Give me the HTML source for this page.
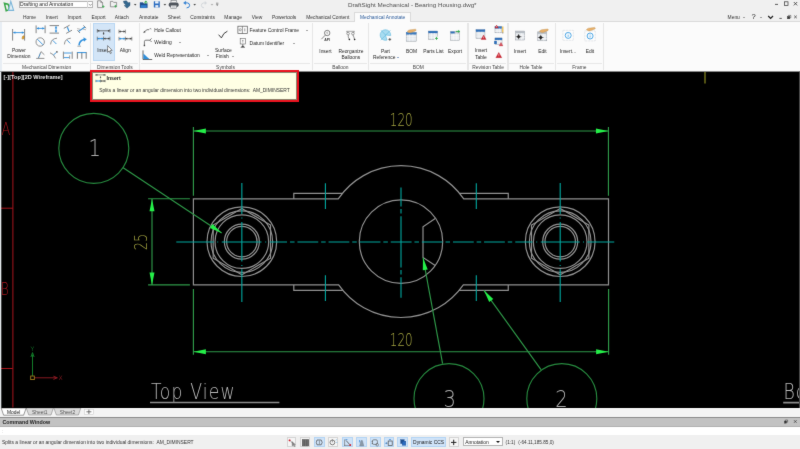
<!DOCTYPE html>
<html lang="en"><head><meta charset="utf-8"><title>DraftSight Mechanical - Bearing Housing.dwg*</title>
<style>
html,body{margin:0;padding:0;background:#f0f0f0;}
body{width:800px;height:449px;overflow:hidden;font-family:"Liberation Sans",sans-serif;color:#333;}
#app{will-change:transform;filter:url(#soft);position:relative;width:800px;height:449px;overflow:hidden;background:#f0f0f0;}
.a{position:absolute;white-space:nowrap;}
.t{position:absolute;white-space:nowrap;font-size:4.9px;line-height:7px;color:#262626;transform:translateX(-50%);text-align:center;}
.tl{position:absolute;white-space:nowrap;font-size:4.9px;line-height:7px;color:#262626;}
.gl{position:absolute;white-space:nowrap;font-size:4.9px;line-height:7px;color:#444;transform:translateX(-50%);top:64.1px;}
.vs{position:absolute;top:23.4px;width:1.2px;height:46.4px;background:#e6e6e6;}
.hs{position:absolute;top:63.1px;height:1px;background:#e8e8e8;}
.dd{position:absolute;width:0;height:0;border-left:1.4px solid transparent;border-right:1.4px solid transparent;border-top:1.8px solid #444;}
#ribbon{position:absolute;left:0;top:21.2px;width:800px;height:50.6px;background:#fbfbfb;border-top:1px solid #dadada;border-bottom:1px solid #e0e0e0;box-sizing:border-box;}
#draw{position:absolute;left:0;top:0;width:800px;height:449px;}
#cad{position:absolute;left:0;top:0;display:block;}
#cad .geo *{fill:none;stroke:#909090;stroke-width:1.2;}
#cad .cl *{fill:none;stroke:#00a8a0;stroke-width:1.1;}
#cad .cl .dd{stroke-dasharray:4.5 2.9 20.8 2.9;}
#cad .cl .dd2{stroke-dasharray:14 2.4 2.4 2.4;}
#cad .dim *{fill:none;stroke:#2e9848;stroke-width:1.15;}
#cad .dim .bl{stroke:#26883e;}
#cad .ah{fill:#24ee48;stroke:none;}
#cad text{font-family:"DejaVu Sans Light","DejaVu Sans","Liberation Sans",sans-serif;font-weight:200;}
#cad .dt text{fill:#a4a440;font-size:16.8px;}
#cad .bt text{fill:#acacac;font-size:23px;}
#cad .tv text{fill:#b8b8b8;font-size:21.6px;}
#cad .tv path{stroke:#8c8c8c;stroke-width:1.6;fill:none;}
#cad .rd path{stroke:#a8141c;stroke-width:1;fill:none;}
#cad .rd text{fill:#b0161e;font-size:18.2px;}
#cad .ucs *{fill:none;stroke-width:.8;}
#cad .ucs text{font-size:6.2px;stroke:none;font-weight:200;}
#cad .vp{font-family:"Liberation Sans",sans-serif;font-weight:700;font-size:6px;fill:#e6e6e6;}
#tip{z-index:5;position:absolute;left:89.9px;top:70.1px;width:209.6px;height:32.3px;box-sizing:border-box;border:2.4px solid #ea121e;background:#ffffe4;}
#tipin{position:absolute;left:0;top:0;right:0;bottom:0;border:.5px solid #8a8a70;box-sizing:border-box;}

</style></head>
<body>
<svg width="0" height="0" style="position:absolute"><filter id="soft" x="0" y="0" width="100%" height="100%" color-interpolation-filters="sRGB"><feConvolveMatrix order="3" kernelMatrix="1 5 1 5 60 5 1 5 1" divisor="84" edgeMode="duplicate" preserveAlpha="true"/></filter></svg>
<div id="app">
<div id="titlebar" class="a" style="left:0;top:0;width:800px;height:12.4px;background:#f0f0f0"></div>
<div class="a" style="left:18.5px;top:.6px;width:74.6px;height:7.9px;box-sizing:border-box;border:.7px solid #b4b4b4;background:#fff"></div>
<div class="a" style="left:87.3px;top:1.2px;width:.5px;height:6.7px;background:#d0d0d0"></div>
<div class="tl" style="left:20px;top:1.3px;font-size:5.1px;color:#222">Drafting and Annotation</div>
<div class="a" style="left:342.3px;top:1.3px;width:140px;text-align:center;font-size:6.25px;line-height:8px;color:#505050">DraftSight Mechanical - Bearing Housing.dwg*</div>
<div id="tabrow" class="a" style="left:0;top:12.4px;width:800px;height:10px;background:#f0f0f0"></div>
<div id="ribbon"></div>
<div class="a" style="left:354.2px;top:11.8px;width:56.8px;height:10.4px;box-sizing:border-box;border:1px solid #dadada;border-bottom:none;background:#fbfbfb"></div>
<div class="t" style="left:29.5px;top:13.7px;color:#333">Home</div>
<div class="t" style="left:51.8px;top:13.7px;color:#333">Insert</div>
<div class="t" style="left:74.5px;top:13.7px;color:#333">Import</div>
<div class="t" style="left:98.6px;top:13.7px;color:#333">Export</div>
<div class="t" style="left:121.8px;top:13.7px;color:#333">Attach</div>
<div class="t" style="left:148.7px;top:13.7px;color:#333">Annotate</div>
<div class="t" style="left:174.2px;top:13.7px;color:#333">Sheet</div>
<div class="t" style="left:202.5px;top:13.7px;color:#333">Constraints</div>
<div class="t" style="left:233.2px;top:13.7px;color:#333">Manage</div>
<div class="t" style="left:257px;top:13.7px;color:#333">View</div>
<div class="t" style="left:284.2px;top:13.7px;color:#333">Powertools</div>
<div class="t" style="left:327.8px;top:13.7px;color:#333">Mechanical Content</div>
<div class="t" style="left:382.6px;top:13.7px;color:#2a5a9a">Mechanical Annotate</div>
<div class="tl" style="left:727.6px;top:13.7px;color:#333">Menu</div>
<div class="dd" style="left:743.3px;top:16.6px;border-top-color:#555"></div>
<div class="dd" style="left:760.3px;top:16.6px;border-top-color:#555"></div>
<div class="t" style="left:753.6px;top:13.4px;font-size:7.6px;color:#222">?</div>
<div class="a" style="left:0;top:22.2px;width:1.6px;height:49.6px;background:#e8eef4"></div>
<div class="vs" style="left:89.8px"></div>
<div class="vs" style="left:139px"></div>
<div class="vs" style="left:311.8px"></div>
<div class="vs" style="left:368.2px"></div>
<div class="vs" style="left:467.4px"></div>
<div class="vs" style="left:507.4px"></div>
<div class="vs" style="left:555px"></div>
<div class="vs" style="left:603px"></div>
<div class="hs" style="left:3px;width:85.5px"></div>
<div class="hs" style="left:91px;width:46.5px"></div>
<div class="hs" style="left:140.5px;width:169.5px"></div>
<div class="hs" style="left:313.5px;width:53px"></div>
<div class="hs" style="left:370px;width:96px"></div>
<div class="hs" style="left:469px;width:37px"></div>
<div class="hs" style="left:509px;width:44.5px"></div>
<div class="hs" style="left:556.5px;width:45px"></div>
<div class="gl" style="left:46.7px">Mechanical Dimension</div>
<div class="gl" style="left:114.9px">Dimension Tools</div>
<div class="gl" style="left:225.5px">Symbols</div>
<div class="gl" style="left:340.3px">Balloon</div>
<div class="gl" style="left:418.3px">BOM</div>
<div class="gl" style="left:488px">Revision Table</div>
<div class="gl" style="left:531px">Hole Table</div>
<div class="gl" style="left:579.4px">Frame</div>
<div class="a" style="left:93.1px;top:23.2px;width:21.6px;height:38.2px;box-sizing:border-box;border:.7px solid #b9d7f3;background:#d3e5f7"></div>
<div class="t" style="left:18.9px;top:46.5px;">Power</div>
<div class="t" style="left:18.9px;top:53px;">Dimension</div>
<div class="t" style="left:103.3px;top:47.1px;">Insert</div>
<div class="t" style="left:125.3px;top:47.1px;">Align</div>
<div class="tl" style="left:154.2px;top:26.8px;">Hole Callout</div>
<div class="tl" style="left:154.2px;top:39.2px;">Welding</div>
<div class="tl" style="left:154.2px;top:51.9px;">Weld Representation</div>
<div class="dd" style="left:179.3px;top:42px;border-top-color:#555"></div>
<div class="dd" style="left:206.7px;top:55px;border-top-color:#555"></div>
<div class="t" style="left:223.4px;top:46.7px;">Surface</div>
<div class="t" style="left:222.3px;top:53.2px;">Finish</div>
<div class="dd" style="left:231.9px;top:56.1px;border-top-color:#555"></div>
<div class="tl" style="left:249.6px;top:26.7px;">Feature Control Frame</div>
<div class="dd" style="left:305.9px;top:29.6px;border-top-color:#555"></div>
<div class="tl" style="left:249.6px;top:39.6px;">Datum Identifier</div>
<div class="dd" style="left:292.5px;top:42.6px;border-top-color:#555"></div>
<div class="t" style="left:325.4px;top:47.5px;">Insert</div>
<div class="t" style="left:350.9px;top:47.5px;">Reorganize</div>
<div class="t" style="left:350.8px;top:53.9px;">Balloons</div>
<div class="t" style="left:385.4px;top:47.5px;">Part</div>
<div class="t" style="left:384.2px;top:53.9px;">Reference</div>
<div class="dd" style="left:396.7px;top:57px;border-top-color:#2a5a9a"></div>
<div class="t" style="left:411.6px;top:47.5px;">BOM</div>
<div class="t" style="left:433.4px;top:47.5px;">Parts List</div>
<div class="t" style="left:455px;top:47.5px;">Export</div>
<div class="t" style="left:481px;top:47.3px;">Insert</div>
<div class="t" style="left:481px;top:53.5px;">Table</div>
<div class="t" style="left:520px;top:47.5px;">Insert</div>
<div class="t" style="left:542.4px;top:47.5px;">Edit</div>
<div class="t" style="left:568px;top:47.5px;">Insert...</div>
<div class="t" style="left:590px;top:47.5px;">Edit</div>
<svg id="ico" class="a" style="left:0;top:0" width="800" height="72" viewBox="0 0 800 72">
<path d="M4.4 3.2 L6.2 10.8 L8.6 10 Q10.2 7 8 4.2 Z" fill="none" stroke="#3aa648" stroke-width="1.5" /><path d="M10.8 1.4 L8.6 10.4 H13.6 Z" fill="#e4f0f6" stroke="#7ab4d8" stroke-width="1.1" />
<path d="M97.6 .8 H100.8 L102.6 2.6 V7.6 H97.6 Z M100.8 .8 V2.6 H102.6" fill="none" stroke="#757575" stroke-width="0.7" /><path d="M102 6.6 H104.6 M103.3 5.3 V7.9" fill="none" stroke="#2aa844" stroke-width="0.7" /><path d="M110.4 6.8 V1.4 H112.8 L113.6 2.4 H116.6 V6.8 Z" fill="none" stroke="#757575" stroke-width="0.7" /><path d="M114.2 6.2 H116.8 M115.5 4.9 V7.5" fill="none" stroke="#2aa844" stroke-width="0.7" /><path d="M123.4 1.2 L126.4 .8 L128.2 2.8 L130 2.4 L130 5.4 L127 8.2 L124.2 5.6 L126 5.2 L124 3.2 Z" fill="#34688e" stroke="#254a6c" stroke-width="0.4" /><path d="M140 2.6 H143 L143.8 3.6 H147.4 V7.8 H140 Z" fill="#1f4e8e" stroke="#1f4e8e" stroke-width="0.3" /><rect x="140.8" y="5.2" width="5.8" height="2.6" fill="#2f7fd0" stroke="none" stroke-width="0.6" rx="0"/><path d="M145.8 4 V1.6 M144.5 2.6 L145.8 .9 L147.1 2.6" fill="none" stroke="#2aa844" stroke-width="0.9" /><rect x="153.8" y="1.2" width="6" height="6.4" fill="#2b6cc0" stroke="none" stroke-width="0" rx="0.5"/><rect x="155.1" y="1.2" width="3.4" height="2.3" fill="#f0f5fb" stroke="none" stroke-width="0.6" rx="0"/><rect x="155.3" y="5.1" width="3" height="2.5" fill="#e4ecf6" stroke="none" stroke-width="0.6" rx="0"/><rect x="168.8" y="2.4" width="9.8" height="4.6" fill="#4e545c" stroke="none" stroke-width="0" rx="1.8"/><rect x="171" y="0.7" width="5.4" height="2" fill="#f4f4f4" stroke="#5c6268" stroke-width="0.5" rx="0"/><rect x="170.8" y="5.2" width="5.8" height="3" fill="#f6f6f6" stroke="#5c6268" stroke-width="0.5" rx="0"/><path d="M171.8 6.4 H175.6 M171.8 7.3 H175.6" fill="none" stroke="#9aa0a6" stroke-width="0.4" /><path d="M184.8 2.9 H187.4 Q189.6 3.1 189.6 5.4 Q189.6 7.8 186.6 7.9" fill="none" stroke="#2f7fd2" stroke-width="1" /><path d="M185.8 1 L183.4 2.9 L185.8 4.8 Z" fill="#2f7fd2" stroke="#2f7fd2" stroke-width="0.2" /><path d="M205.6 3 H203.4 Q201.4 3.2 201.4 5.4 Q201.4 7.8 204 7.8" fill="none" stroke="#d4d8dc" stroke-width="1" /><path d="M204.8 1.2 L207 3 L204.8 4.8 Z" fill="#d4d8dc" stroke="#d4d8dc" stroke-width="0.2" /><path d="M134 4 L135.2 5.6 L136.4 4 Z" fill="#444" stroke="#444" stroke-width="0.1" /><path d="M163.7 4 L164.9 5.6 L166.1 4 Z" fill="#444" stroke="#444" stroke-width="0.1" /><path d="M193.5 4 L194.7 5.6 L195.9 4 Z" fill="#444" stroke="#444" stroke-width="0.1" /><path d="M210.8 4 L212 5.6 L213.2 4 Z" fill="#aaa" stroke="#aaa" stroke-width="0.1" /><path d="M216 3.2 H218.4" fill="none" stroke="#555" stroke-width="0.6" /><path d="M216 4.4 L217.2 5.8 L218.4 4.4 Z" fill="#555" stroke="#555" stroke-width="0.1" /><path d="M88.8 3.9 L90.3 5.5 L91.8 3.9" fill="none" stroke="#555" stroke-width="0.6" />
<path d="M775 4.4 H778" fill="none" stroke="#333" stroke-width="0.8" /><rect x="784.4" y="1.8" width="3.6" height="3.6" fill="none" stroke="#333" stroke-width="0.7" rx="0"/><path d="M793.8 2 L797.2 5.4 M797.2 2 L793.8 5.4" fill="none" stroke="#333" stroke-width="0.8" /><path d="M768.2 16 L770.6 18.4 L773 16" fill="none" stroke="#222" stroke-width="1.3" /><path d="M779.4 18.4 H781.8" fill="none" stroke="#333" stroke-width="0.8" /><rect x="787.4" y="16.4" width="2.4" height="2.4" fill="#333" stroke="#333" stroke-width="0.4" rx="0"/><path d="M788.4 16.2 V15.4 H790.8 V17.8 H790" fill="none" stroke="#333" stroke-width="0.5" /><path d="M794.2 15.6 L796.8 18.2 M796.8 15.6 L794.2 18.2" fill="none" stroke="#333" stroke-width="0.7" />
<path d="M12.6 29 V40.6 M24.6 29 V40.6" fill="none" stroke="#858585" stroke-width="1" /><path d="M13.4 32.6 H23.8" fill="none" stroke="#2f8fdc" stroke-width="0.9" /><path d="M13.2 32.6 L15.3 31.55 L15.3 33.65 Z" fill="#2f8fdc" stroke="#2f8fdc" stroke-width="0.1" /><path d="M24 32.6 L21.9 31.55 L21.9 33.65 Z" fill="#2f8fdc" stroke="#2f8fdc" stroke-width="0.1" /><ellipse cx="23.2" cy="37.5" rx="1" ry="1.8" fill="#eaa428" stroke="#8a6420" stroke-width=".35" transform="rotate(18 23.2 37.5)"/><path d="M36.1 25.4 V33.2 M45.1 25.4 V33.2" fill="none" stroke="#858585" stroke-width="1" /><path d="M36.8 28.4 H44.4" fill="none" stroke="#2f8fdc" stroke-width="0.9" /><path d="M36.7 28.4 L38.8 27.35 L38.8 29.45 Z" fill="#2f8fdc" stroke="#2f8fdc" stroke-width="0.1" /><path d="M44.5 28.4 L42.4 27.35 L42.4 29.45 Z" fill="#2f8fdc" stroke="#2f8fdc" stroke-width="0.1" /><path d="M49.6 25.6 H59 M49.6 33.1 H59" fill="none" stroke="#858585" stroke-width="1" /><path d="M56 26.4 V32.4" fill="none" stroke="#2f8fdc" stroke-width="0.9" /><path d="M56 26.2 L54.95 28.3 L57.05 28.3 Z" fill="#2f8fdc" stroke="#2f8fdc" stroke-width="0.1" /><path d="M56 32.6 L54.95 30.5 L57.05 30.5 Z" fill="#2f8fdc" stroke="#2f8fdc" stroke-width="0.1" /><path d="M63.8 28.4 L69.6 25.2 M66.2 33.4 L72 30.2" fill="none" stroke="#858585" stroke-width="1" /><path d="M67.4 27.2 L69 31.4" fill="none" stroke="#2f8fdc" stroke-width="1.1" /><path d="M77.4 30.2 L80 33 M83.4 25.4 L86 28.2" fill="none" stroke="#858585" stroke-width="1" /><path d="M78.6 31.4 L84.8 27" fill="none" stroke="#2f8fdc" stroke-width="1.1" /><path d="M77.2 28.6 L80.6 29.4 M82.6 29 L86 29.8" fill="none" stroke="#858585" stroke-width="0.6" /><circle cx="40.2" cy="42" r="4.2" fill="none" stroke="#858585" stroke-width="0.9"/><path d="M37.4 39.2 L43 44.8" fill="none" stroke="#2f8fdc" stroke-width="0.9" /><path d="M50.6 44.4 Q51 38.6 57 38.2" fill="none" stroke="#858585" stroke-width="0.9" /><path d="M56.4 44 L52.8 40.4" fill="none" stroke="#2f8fdc" stroke-width="0.9" /><path d="M64.4 44.4 Q64.8 38.6 70.8 38.2" fill="none" stroke="#858585" stroke-width="0.9" /><path d="M70.2 43.4 L67.2 40.2" fill="none" stroke="#2f8fdc" stroke-width="0.9" /><path d="M79 45.4 Q79.4 40.4 84.4 39.6" fill="none" stroke="#2f8fdc" stroke-width="1.5" /><path d="M83.6 37.6 L86.6 39.2 L84 41.4 Z" fill="#2f8fdc" stroke="#2f8fdc" stroke-width="0.2" /><path d="M77.4 46.2 H81" fill="none" stroke="#858585" stroke-width="0.7" /><path d="M36.2 58.4 H44.4 M38.4 58.2 L41 51.6 L44.4 54.8" fill="none" stroke="#858585" stroke-width="0.9" /><path d="M38.6 57.6 L40.4 53" fill="none" stroke="#2f8fdc" stroke-width="0.9" stroke-dasharray="1 .6"/><path d="M50 52.8 Q54 54 55.6 58.4" fill="none" stroke="#858585" stroke-width="0.9" /><path d="M53.4 55 L56.4 52.4" fill="none" stroke="#2f8fdc" stroke-width="0.9" /><rect x="56.2" y="51.2" width="1.4" height="1.4" fill="#444" stroke="none" stroke-width="0.6" rx="0"/><path d="M63.4 51.6 V58.8 M72.2 51.6 V58.8" fill="none" stroke="#858585" stroke-width="1" /><path d="M64 53 H71.6 M64 57.6 H69.4" fill="none" stroke="#2f8fdc" stroke-width="0.9" /><path d="M69.6 55.4 V58.8" fill="none" stroke="#858585" stroke-width="0.8" /><path d="M77.4 52 V58.8 M81.8 52 V58.8 M86.2 52 V58.8" fill="none" stroke="#858585" stroke-width="1.1" /><path d="M77.4 52.6 H86.2" fill="none" stroke="#2f8fdc" stroke-width="1" />
<path d="M97.4 30.8 H109.8" fill="none" stroke="#444" stroke-width="0.7" /><path d="M97.3 29 V32.6 M109.9 29 V32.6" fill="none" stroke="#444" stroke-width="0.6" /><path d="M97.4 30.8 L99.2 29.9 L99.2 31.7 Z" fill="#444" stroke="#444" stroke-width="0.1" /><path d="M109.8 30.8 L108 29.9 L108 31.7 Z" fill="#444" stroke="#444" stroke-width="0.1" /><path d="M103.6 32 V35" fill="none" stroke="#444" stroke-width="0.6" /><path d="M103.6 32.6 L102.8 34 L104.4 34 Z" fill="#444" stroke="#444" stroke-width="0.1" /><path d="M97.4 38.6 H103.6" fill="none" stroke="#2f8fdc" stroke-width="0.9" /><path d="M103.6 38.6 H109.8" fill="none" stroke="#444" stroke-width="0.7" /><path d="M97.3 36.7 V40.5 M109.9 36.7 V40.5 M103.6 36.6 V40.6" fill="none" stroke="#444" stroke-width="0.6" /><path d="M97.4 38.6 L99.2 37.7 L99.2 39.5 Z" fill="#2f8fdc" stroke="#2f8fdc" stroke-width="0.1" /><path d="M103.5 38.6 L101.7 37.7 L101.7 39.5 Z" fill="#2f8fdc" stroke="#2f8fdc" stroke-width="0.1" /><path d="M103.7 38.6 L105.5 37.7 L105.5 39.5 Z" fill="#444" stroke="#444" stroke-width="0.1" /><path d="M109.8 38.6 L108 37.7 L108 39.5 Z" fill="#444" stroke="#444" stroke-width="0.1" /><path d="M107.6 45.6 V52.4 L109.2 51 L110.4 53.6 L111.4 53.1 L110.2 50.6 L112.2 50.4 Z" fill="#fff" stroke="#222" stroke-width="0.5" /><path d="M119.1 31.5 H125.2" fill="none" stroke="#444" stroke-width="0.7" /><path d="M119 29.6 V33.4 M125.3 29.6 V33.4" fill="none" stroke="#444" stroke-width="0.6" /><path d="M119.1 31.5 L120.8 30.6 L120.8 32.4 Z" fill="#444" stroke="#444" stroke-width="0.1" /><path d="M125.2 31.5 L123.5 30.6 L123.5 32.4 Z" fill="#444" stroke="#444" stroke-width="0.1" /><path d="M119.1 38.7 H125.3" fill="none" stroke="#2f8fdc" stroke-width="0.9" /><path d="M125.3 38.7 H131.7" fill="none" stroke="#444" stroke-width="0.7" /><path d="M119 36.8 V40.6 M125.3 36.7 V40.7 M131.8 36.8 V40.6" fill="none" stroke="#444" stroke-width="0.6" /><path d="M119.1 38.7 L120.9 37.8 L120.9 39.6 Z" fill="#2f8fdc" stroke="#2f8fdc" stroke-width="0.1" /><path d="M125.2 38.7 L123.4 37.8 L123.4 39.6 Z" fill="#2f8fdc" stroke="#2f8fdc" stroke-width="0.1" /><path d="M125.4 38.7 L127.2 37.8 L127.2 39.6 Z" fill="#444" stroke="#444" stroke-width="0.1" /><path d="M131.7 38.7 L129.9 37.8 L129.9 39.6 Z" fill="#444" stroke="#444" stroke-width="0.1" />
<path d="M144.2 32 L147 29.7 H149" fill="none" stroke="#444" stroke-width="0.7" /><path d="M143.4 32.7 L145.4 32.2 L144.4 30.9 Z" fill="#444" stroke="#444" stroke-width="0.2" /><path d="M149.8 28.2 L151 29.4 M151 28.2 L149.8 29.4" fill="none" stroke="#444" stroke-width="0.5" /><path d="M144.4 45.2 V41.6 Q144.4 40.2 145.8 40.2 H149.8 M149.8 40.2 L151.6 38.4 M149.8 40.2 L151.6 42" fill="none" stroke="#444" stroke-width="0.7" /><rect x="143.7" y="44.8" width="1.4" height="1.4" fill="#444" stroke="none" stroke-width="0.6" rx="0"/><path d="M143 50.4 V59.5 H152.2" fill="none" stroke="#444" stroke-width="0.8" /><path d="M143.5 53.8 V59 H149.2 Z" fill="#2f8fdc" stroke="#2f8fdc" stroke-width="0.2" /><path d="M218.6 34.7 L221.4 37.9 Q223.4 32.6 227.4 31.2" fill="none" stroke="#333" stroke-width="0.95" /><rect x="237.9" y="26.2" width="9.4" height="7.4" fill="#fdfdfd" stroke="#555" stroke-width="0.7" rx="0"/><path d="M242.4 26.2 V33.6" fill="none" stroke="#555" stroke-width="0.6" /><circle cx="240.2" cy="29.8" r="1.1" fill="none" stroke="#555" stroke-width="0.5"/><path d="M244.8 28.4 V31.4" fill="none" stroke="#555" stroke-width="0.6" /><rect x="240.2" y="38.6" width="5.2" height="5.4" fill="#fdfdfd" stroke="#666" stroke-width="0.6" rx="0"/><path d="M242.8 40 V42.6 M242.2 40.4 H243.4" fill="none" stroke="#666" stroke-width="0.5" /><path d="M242.8 44 V46" fill="none" stroke="#444" stroke-width="0.6" /><path d="M240.6 47.4 L242.8 45.6 L245 47.4 Z" fill="#444" stroke="#444" stroke-width="0.2" />
<circle cx="327.2" cy="33" r="2.7" fill="none" stroke="#555" stroke-width="0.7"/><path d="M325.3 35.1 L321.4 39.2" fill="none" stroke="#555" stroke-width="0.7" /><path d="M327.2 31.8 V34.2 M326.6 32.3 L327.2 31.8" fill="none" stroke="#555" stroke-width="0.45" /><text x="324.2" y="40.7" font-size="3.5" font-weight="700" fill="#3a3a3a" font-family="Liberation Sans, sans-serif">API</text><circle cx="348.1" cy="33.6" r="1.3" fill="none" stroke="#555" stroke-width="0.55"/><circle cx="352.9" cy="33.6" r="1.3" fill="none" stroke="#555" stroke-width="0.55"/><path d="M346.4 31.3 H354.6 M347 31.3 V32.6 M354 31.3 V32.6" fill="none" stroke="#555" stroke-width="0.5" /><path d="M348.4 35 Q347.6 37 349.2 39 M353 35 Q354 37 354.4 39" fill="none" stroke="#555" stroke-width="0.6" /><circle cx="349.4" cy="39.4" r="0.75" fill="#222" stroke="#222" stroke-width="0.1"/><circle cx="354.6" cy="39.4" r="0.75" fill="#222" stroke="#222" stroke-width="0.1"/>
<path d="M385.5 35 L390.7 35.6 A5.3 5.3 0 1 0 387 40.1 Z" fill="#a8dcf0" stroke="#62b8de" stroke-width="0.6" /><path d="M381 30.2 L385.5 35 M390.4 30.2 L380.8 40.2" fill="none" stroke="#62b8de" stroke-width="0.6" /><path d="M388.4 39.4 H391.2 M389.8 38 V40.8" fill="none" stroke="#333" stroke-width="0.7" /><rect x="406.2" y="32.5" width="10" height="8.7" fill="#e2e7ec" stroke="#8a9098" stroke-width="0.45" rx="0"/><rect x="406.2" y="32.5" width="10" height="1.9" fill="#3a78bc" stroke="#3a78bc" stroke-width="0.3" rx="0"/><path d="M409.533 34.4 V41.2 M412.867 34.4 V41.2 M406.2 36.6667 H416.2 M406.2 38.9333 H416.2" fill="none" stroke="#fbfbfb" stroke-width="0.55" /><path d="M407.2 31.4 q1.4 -1.9 4 -1.7 l4.2 -0.5 q1.5 0.4 0.2 1.7 l-4.6 1.7 q-2.4 0.4 -3.8 -1.2 Z" fill="#e8b06a" stroke="#b88848" stroke-width="0.35" /><rect x="428.6" y="31.1" width="8.8" height="8.3" fill="#e2e7ec" stroke="#8a9098" stroke-width="0.45" rx="0"/><rect x="428.6" y="31.1" width="8.8" height="1.9" fill="#2f6fb8" stroke="#2f6fb8" stroke-width="0.3" rx="0"/><path d="M431.533 33 V39.4 M434.467 33 V39.4 M428.6 35.1333 H437.4 M428.6 37.2667 H437.4" fill="none" stroke="#fbfbfb" stroke-width="0.55" /><rect x="434.4" y="36.6" width="3.6" height="3.4" fill="#fbfbfb" stroke="none" stroke-width="0.6" rx="0"/><path d="M435 38.4 H438 M436.5 36.9 V39.9" fill="none" stroke="#2aa844" stroke-width="0.8" /><rect x="450.5" y="31.5" width="8.9" height="8.7" fill="#eceff2" stroke="#8a9098" stroke-width="0.45" rx="0"/><rect x="450.5" y="31.5" width="8.9" height="1.9" fill="#c4cad0" stroke="#c4cad0" stroke-width="0.3" rx="0"/><path d="M453.467 33.4 V40.2 M456.433 33.4 V40.2 M450.5 35.6667 H459.4 M450.5 37.9333 H459.4" fill="none" stroke="#fbfbfb" stroke-width="0.55" /><rect x="450.5" y="31.5" width="4.2" height="1.9" fill="#2f6fb8" stroke="none" stroke-width="0.6" rx="0"/><path d="M455.8 31.4 H459" fill="none" stroke="#2aa844" stroke-width="0.9" /><path d="M458.4 30.1 L460 31.4 L458.4 32.7 Z" fill="#2aa844" stroke="#2aa844" stroke-width="0.2" /><rect x="476" y="29.8" width="8.9" height="8.6" fill="#e2e7ec" stroke="#8a9098" stroke-width="0.45" rx="0"/><rect x="476" y="29.8" width="8.9" height="1.9" fill="#2f6fb8" stroke="#2f6fb8" stroke-width="0.3" rx="0"/><path d="M478.967 31.7 V38.4 M481.933 31.7 V38.4 M476 33.9333 H484.9 M476 36.1667 H484.9" fill="none" stroke="#fbfbfb" stroke-width="0.55" /><path d="M483.6 35.1 L486.1 39.475 L481.1 39.475 Z" fill="#cc2430" stroke="#b01c28" stroke-width="0.3" /><path d="M483.6 36.475 V38.35" fill="none" stroke="#fff" stroke-width="0.5" /><rect x="495" y="26.6" width="6.6" height="6.2" fill="#e2e7ec" stroke="#8a9098" stroke-width="0.45" rx="0"/><rect x="495" y="26.6" width="6.6" height="1.9" fill="#3a78bc" stroke="#3a78bc" stroke-width="0.3" rx="0"/><path d="M497.2 28.5 V32.8 M499.4 28.5 V32.8 M495 29.9333 H501.6 M495 31.3667 H501.6" fill="none" stroke="#fbfbfb" stroke-width="0.55" /><path d="M496.6 25.1 L498.3 28.075 L494.9 28.075 Z" fill="#cc2430" stroke="#b01c28" stroke-width="0.3" /><path d="M496.6 26.035 V27.31" fill="none" stroke="#fff" stroke-width="0.5" /><path d="M502.8 26.6 V32.4" fill="none" stroke="#e8b030" stroke-width="1.1" /><path d="M502.8 32.4 V33.4" fill="none" stroke="#444" stroke-width="0.8" /><rect x="495" y="38" width="7" height="6.4" fill="#e2e7ec" stroke="#8a9098" stroke-width="0.45" rx="0"/><rect x="495" y="38" width="7" height="1.9" fill="#2f6fb8" stroke="#2f6fb8" stroke-width="0.3" rx="0"/><path d="M497.333 39.9 V44.4 M499.667 39.9 V44.4 M495 41.4 H502 M495 42.9 H502" fill="none" stroke="#fbfbfb" stroke-width="0.55" /><rect x="494.2" y="41" width="2.6" height="3" fill="#2f6fb8" stroke="none" stroke-width="0.6" rx="0"/><path d="M501 42.5 L502.9 45.825 L499.1 45.825 Z" fill="#cc2430" stroke="#b01c28" stroke-width="0.3" /><path d="M501 43.545 V44.97" fill="none" stroke="#fff" stroke-width="0.5" /><path d="M498.8 52.4 L501.8 57.65 L495.8 57.65 Z" fill="#cc2430" stroke="#b01c28" stroke-width="0.3" /><path d="M498.8 54.05 V56.3" fill="none" stroke="#fff" stroke-width="0.5" /><rect x="515.7" y="31.1" width="9" height="8.9" fill="#e6eaee" stroke="#8a9098" stroke-width="0.45" rx="0"/><rect x="515.7" y="31.1" width="9" height="1.9" fill="#b6bcc2" stroke="#b6bcc2" stroke-width="0.3" rx="0"/><path d="M518.7 33 V40 M521.7 33 V40 M515.7 35.3333 H524.7 M515.7 37.6667 H524.7" fill="none" stroke="#fbfbfb" stroke-width="0.55" /><path d="M516.7 36.7 L518.6 34.8 L520.5 36.7 L518.6 38.6 Z" fill="#2a2a2a" stroke="#222" stroke-width="0.2" /><path d="M515.8 36.7 H521.6 M518.6 33.9 V39.5" fill="none" stroke="#222" stroke-width="0.45" /><rect x="537.8" y="31.9" width="9" height="8.9" fill="#e6eaee" stroke="#8a9098" stroke-width="0.45" rx="0"/><rect x="537.8" y="31.9" width="9" height="1.9" fill="#b6bcc2" stroke="#b6bcc2" stroke-width="0.3" rx="0"/><path d="M540.8 33.8 V40.8 M543.8 33.8 V40.8 M537.8 36.1333 H546.8 M537.8 38.4667 H546.8" fill="none" stroke="#fbfbfb" stroke-width="0.55" /><path d="M538.8 37.5 L540.7 35.6 L542.6 37.5 L540.7 39.4 Z" fill="#2a2a2a" stroke="#222" stroke-width="0.2" /><path d="M537.9 37.5 H543.7 M540.7 34.7 V40.3" fill="none" stroke="#222" stroke-width="0.45" /><path d="M539.4 31.2 q1.4 -1.9 4 -1.7 l4.2 -0.5 q1.5 0.4 0.2 1.7 l-4.6 1.7 q-2.4 0.4 -3.8 -1.2 Z" fill="#e8b06a" stroke="#b88848" stroke-width="0.35" /><rect x="562.9" y="30.3" width="10.4" height="10" fill="#fdfdfd" stroke="#b8c0c8" stroke-width="0.5" rx="0" stroke-dasharray=".8 .7"/><circle cx="568.2" cy="35.4" r="3" fill="#f2f9fe" stroke="#3a9ce0" stroke-width="0.85"/><path d="M568.2 34.9 V36.9" fill="none" stroke="#3a9ce0" stroke-width="0.6" /><path d="M568.2 33.7 V34.2" fill="none" stroke="#3a9ce0" stroke-width="0.6" /><rect x="584.8" y="30.9" width="10.4" height="10" fill="#fdfdfd" stroke="#b8c0c8" stroke-width="0.5" rx="0" stroke-dasharray=".8 .7"/><circle cx="590.1" cy="36" r="3" fill="#f2f9fe" stroke="#3a9ce0" stroke-width="0.85"/><path d="M590.1 35.5 V37.5" fill="none" stroke="#3a9ce0" stroke-width="0.6" /><path d="M590.1 34.3 V34.8" fill="none" stroke="#3a9ce0" stroke-width="0.6" /><path d="M586.4 29.6 q1.4 -1.9 4 -1.7 l4.2 -0.5 q1.5 0.4 0.2 1.7 l-4.6 1.7 q-2.4 0.4 -3.8 -1.2 Z" fill="#e8b06a" stroke="#b88848" stroke-width="0.35" />
</svg>
<div id="tip"><div id="tipin"><svg class="a" style="left:2px;top:1.4px" width="14" height="12" viewBox="94.4 77 14 12"><path d="M95.4 77.9 H104.4" fill="none" stroke="#444" stroke-width="0.6" /><path d="M95.2 76.9 V78.9 M104.6 76.9 V78.9" fill="none" stroke="#444" stroke-width="0.5" /><path d="M95.2 77.9 L96.8 77.2 L96.8 78.6 Z" fill="#444" stroke="#444" stroke-width="0.1" /><path d="M104.6 77.9 L103 77.2 L103 78.6 Z" fill="#444" stroke="#444" stroke-width="0.1" /><path d="M99.9 79.2 V81.4" fill="none" stroke="#444" stroke-width="0.5" /><path d="M99.9 79.6 L99.2 80.7 L100.6 80.7 Z" fill="#444" stroke="#444" stroke-width="0.1" /><path d="M95.4 84 H99.9" fill="none" stroke="#2f8fdc" stroke-width="0.7" /><path d="M99.9 84 H104.4" fill="none" stroke="#444" stroke-width="0.6" /><path d="M95.2 82.8 V85.2 M104.6 82.8 V85.2 M99.9 82.6 V85.4" fill="none" stroke="#444" stroke-width="0.5" /><path d="M95.2 84 L96.8 83.3 L96.8 84.7 Z" fill="#2f8fdc" stroke="#2f8fdc" stroke-width="0.1" /><path d="M99.8 84 L98.2 83.3 L98.2 84.7 Z" fill="#2f8fdc" stroke="#2f8fdc" stroke-width="0.1" /><path d="M100 84 L101.6 83.3 L101.6 84.7 Z" fill="#444" stroke="#444" stroke-width="0.1" /><path d="M104.6 84 L103 83.3 L103 84.7 Z" fill="#444" stroke="#444" stroke-width="0.1" /></svg><div class="a" style="left:13.6px;top:2.4px;font-size:5.2px;line-height:7px;font-weight:700;color:#222">Insert</div><div class="a" style="left:6.3px;top:14.1px;font-size:4.92px;line-height:7px;color:#333;white-space:pre">Splits a linear or an angular dimension into two individual dimensions:  AM_DIMINSERT</div></div></div>
<div id="draw">
<svg id="cad" width="800" height="449" viewBox="0 0 800 449">
<defs><clipPath id="vp"><rect x="0" y="71.6" width="800" height="336.7"/></clipPath></defs>
<rect x="0" y="71.6" width="800" height="336.7" fill="#000"/>
<g clip-path="url(#vp)">
<g class="geo">
<path d="M338.25 198.90 L193.40 198.90 L193.40 284.90 L338.66 284.90 A75.9 75.9 0 0 0 463.34 284.90 L608.50 284.90 L608.50 198.90 L463.75 198.90 A75.9 75.9 0 0 0 338.25 198.90 Z"/>
<path d="M293.80 198.90 L293.80 193.40 L342.37 193.40"/>
<path d="M508.25 198.90 L508.25 193.40 L459.63 193.40"/>
<path d="M293.80 284.90 L293.80 290.40 L342.87 290.40"/>
<path d="M508.25 284.90 L508.25 290.40 L459.13 290.40"/>
<circle cx="401" cy="241.6" r="41.7"/>
<path d="M435.2 218.4 L423 226.8 L423 257.4 L435.2 265.4"/>
<circle cx="241.85" cy="241.65" r="34.85"/><polygon points="241.85,208.55 213.18,225.10 213.18,258.20 241.85,274.75 270.52,258.20 270.52,225.10"/><circle cx="241.85" cy="241.65" r="30.8"/><circle cx="241.85" cy="241.65" r="26.8"/><circle cx="241.85" cy="241.65" r="17.5"/><circle cx="241.85" cy="241.65" r="15.2"/>
<circle cx="560.2" cy="241.65" r="34.85"/><polygon points="560.20,208.55 531.53,225.10 531.53,258.20 560.20,274.75 588.87,258.20 588.87,225.10"/><circle cx="560.2" cy="241.65" r="30.8"/><circle cx="560.2" cy="241.65" r="26.8"/><circle cx="560.2" cy="241.65" r="17.5"/><circle cx="560.2" cy="241.65" r="15.2"/>
</g>
<g class="cl">
<path class="dd" d="M290.05 242 H512.2"/>
<path d="M176.3 242 H213.8 M217.2 242 H218.2 M221.75 242 H261.5 M265.2 242 H266.2 M269.75 242 H287"/>
<path d="M515.25 242 H532.5 M536.2 242 H537.2 M540.75 242 H579.75 M583 242 H584 M587.25 242 H614.25"/>
<path d="M401 187.4 V206.6 M401 209 V213.6 M401 216.2 V267.4 M401 270 V274.6 M401 277.2 V297.7"/>
<path d="M241.85 183 V214 M241.85 217.4 V218.4 M241.85 221.9 V261.4 M241.85 264.9 V265.9 M241.85 269.3 V302"/>
<path d="M560.2 183 V214 M560.2 217.4 V218.4 M560.2 221.9 V261.4 M560.2 264.9 V265.9 M560.2 269.3 V302"/>
<path d="M325.4 183.3 V208.9 M325.4 275.3 V300.9"/>
<path d="M476.3 183.3 V208.9 M476.3 275.3 V300.9"/>
</g>
<g class="dim">
<path d="M193.4 127 V195.7 M608.45 127 V195.7 M193.4 131 H608.45"/>
<path d="M193.4 289 V354.8 M608.6 289 V354.8 M193.4 351.7 H608.6"/>
<path d="M148.1 198.7 H189.9 M148.1 284.9 H189.9 M152 198.7 V284.9"/>
<path d="M122.8 167.5 L221.7 232.9"/>
<path d="M442.6 363.6 L423 257.6"/>
<path d="M541 369.6 L483.9 290.3"/>
<circle class="bl" cx="93.8" cy="148.3" r="35"/>
<circle class="bl" cx="449" cy="398.6" r="35"/>
<circle class="bl" cx="561.8" cy="398.6" r="35"/>
</g>
<g>
<polygon class="ah" points="193.40,131.00 205.90,128.50 205.90,133.50"/>
<polygon class="ah" points="608.45,131.00 595.95,133.50 595.95,128.50"/>
<polygon class="ah" points="193.40,351.70 205.90,349.20 205.90,354.20"/>
<polygon class="ah" points="608.60,351.70 596.10,354.20 596.10,349.20"/>
<polygon class="ah" points="152.00,198.70 154.50,211.20 149.50,211.20"/>
<polygon class="ah" points="152.00,284.90 149.50,272.40 154.50,272.40"/>
<polygon class="ah" points="221.70,232.90 209.89,228.09 212.65,223.92"/>
<polygon class="ah" points="423.00,257.60 427.73,269.44 422.81,270.35"/>
<polygon class="ah" points="483.90,290.30 493.23,298.98 489.18,301.90"/>
</g>
<g class="dt">
<text x="401.2" y="125.7" text-anchor="middle" textLength="22.8" lengthAdjust="spacingAndGlyphs">120</text>
<text x="401.2" y="346.3" text-anchor="middle" textLength="22.8" lengthAdjust="spacingAndGlyphs">120</text>
<text transform="translate(146.6 242) rotate(-90)" text-anchor="middle" textLength="16.6" lengthAdjust="spacingAndGlyphs">25</text>
</g>
<g class="bt">
<text x="94.6" y="156.4" text-anchor="middle" textLength="12.4" lengthAdjust="spacingAndGlyphs">1</text>
<text x="449.6" y="407" text-anchor="middle" textLength="12.4" lengthAdjust="spacingAndGlyphs">3</text>
<text x="561.4" y="407" text-anchor="middle" textLength="12.4" lengthAdjust="spacingAndGlyphs">2</text>
</g>
<g class="tv">
<text transform="translate(150.9 398.5) scale(.8 1)" style="letter-spacing:1.45px">Top View</text>
<text transform="translate(783.4 398.5) scale(.8 1)" style="letter-spacing:1.45px">Bo</text>
<path d="M150 402.5 H279.4 M783.2 402.6 H800"/>
</g>
<g class="rd">
<path d="M12.9 72 V407.4 M0 208.2 H12.9 M0 368.5 H12.9"/>
<text x="1.4" y="135.3" textLength="8.8" lengthAdjust="spacingAndGlyphs">A</text>
<text x="0.8" y="294.7" textLength="8" lengthAdjust="spacingAndGlyphs">B</text>
</g>
<g class="ucs">
<path stroke="#a8202a" d="M34.4 377.8 H56 M53.4 376.2 L57.4 377.8 L53.4 379.4"/>
<path stroke="#169a34" d="M32.5 375.9 V354.6 M30.9 357 L32.5 352.6 L34.1 357"/>
<rect x="30.7" y="376" width="3.6" height="3.6" stroke="#b08a20"/>
<text x="58.6" y="380" style="fill:#b8242e">X</text>
<text x="30.5" y="350.8" style="fill:#18a838">Y</text>
</g>
<path d="M705 72 V83.6" stroke="#8a8a20" stroke-width="1.2"/>
<path d="M0.65 71.6 V408.1" stroke="#e2e6ea" stroke-width="1.3"/>
<path d="M799.5 71.6 V408.1" stroke="#4a4a4a" stroke-width="1"/>
<text class="vp" x="3.6" y="78.6" textLength="59" lengthAdjust="spacingAndGlyphs">[-][Top][2D Wireframe]</text>
</g>
</svg>
</div>
<div class="a" style="left:0;top:408.2px;width:800px;height:8.4px;background:#f4f4f4"></div>
<div class="a" style="left:0;top:416.5px;width:800px;height:10.9px;box-sizing:border-box;background:#c2c2c2;border-top:.9px solid #8c8c8c;border-bottom:.6px solid #b0b0b0"></div>
<div class="a" style="left:2.5px;top:418.7px;font-size:5.3px;line-height:7px;font-weight:700;color:#222">Command Window</div>
<div class="a" style="left:0;top:427.4px;width:800px;height:7.4px;background:#fff"></div>
<div class="a" style="left:0;top:434.6px;width:800px;height:14.4px;background:#f0f0f0"></div>
<div class="a" style="left:1.9px;top:439.3px;font-size:4.95px;line-height:7px;color:#333;white-space:pre">Splits a linear or an angular dimension into two individual dimensions:  AM_DIMINSERT</div>
<div class="a" style="left:2px;top:427.6px;font-size:4.6px;line-height:7px;color:#b0b0b0">:</div>
<svg class="a" style="left:0;top:408px" width="100" height="9" viewBox="0 408 100 9"><path d="M26.2 408 L28.8 415 H51 L53.4 408 Z M53.8 408 L56.4 415 H78.4 L80.8 408 Z" fill="#dadada" stroke="#777" stroke-width=".5"/><path d="M1.2 408 L3.6 415.2 H23.6 L26.2 408 Z" fill="#fff" stroke="#555" stroke-width=".6"/><rect x="84.3" y="409.2" width="9.2" height="5.2" fill="#fdfdfd" stroke="#c4c4c4" stroke-width=".5"/><path d="M86.4 411.8 H91.4 M88.9 409.6 V414" stroke="#444" stroke-width=".7"/></svg>
<div class="t" style="left:13.6px;top:408.6px;font-size:4.9px;color:#111">Model</div>
<div class="t" style="left:39.8px;top:408.6px;font-size:4.9px;color:#555">Sheet1</div>
<div class="t" style="left:67.4px;top:408.6px;font-size:4.9px;color:#555">Sheet2</div>
<div class="a" style="left:286.5px;top:436.5px;width:9.8px;height:10.6px;box-sizing:border-box;background:#f6f6f6;border:.6px solid #d4d4d4"></div>
<div class="a" style="left:300.4px;top:436.5px;width:10px;height:10.6px;box-sizing:border-box;background:#f6f6f6;border:.6px solid #d4d4d4"></div>
<div class="a" style="left:313.8px;top:436.5px;width:11.2px;height:10.6px;box-sizing:border-box;background:#cfe3f8;border:.6px solid #b4d4f4"></div>
<div class="a" style="left:328.1px;top:436.5px;width:10px;height:10.6px;box-sizing:border-box;background:#f6f6f6;border:.6px solid #d4d4d4"></div>
<div class="a" style="left:341.9px;top:436.5px;width:11.2px;height:10.6px;box-sizing:border-box;background:#cfe3f8;border:.6px solid #b4d4f4"></div>
<div class="a" style="left:356.2px;top:436.5px;width:10.7px;height:10.6px;box-sizing:border-box;background:#cfe3f8;border:.6px solid #b4d4f4"></div>
<div class="a" style="left:369.7px;top:436.5px;width:10.9px;height:10.6px;box-sizing:border-box;background:#cfe3f8;border:.6px solid #b4d4f4"></div>
<div class="a" style="left:383.5px;top:436.5px;width:10.9px;height:10.6px;box-sizing:border-box;background:#cfe3f8;border:.6px solid #b4d4f4"></div>
<div class="a" style="left:397.2px;top:436.5px;width:10.9px;height:10.6px;box-sizing:border-box;background:#cfe3f8;border:.6px solid #b4d4f4"></div>
<div class="a" style="left:411.2px;top:436.5px;width:34.4px;height:10.6px;box-sizing:border-box;background:#cfe3f8;border:.6px solid #b4d4f4"></div>
<div class="a" style="left:448.5px;top:436.5px;width:10.3px;height:10.6px;box-sizing:border-box;background:#f6f6f6;border:.6px solid #d4d4d4"></div>
<div class="t" style="left:428.6px;top:438.7px;font-size:4.95px;color:#1a1a1a">Dynamic CCS</div>
<div class="a" style="left:463.2px;top:437.2px;width:39.8px;height:9.2px;box-sizing:border-box;background:#fff;border:.6px solid #b4b4b4"></div>
<div class="tl" style="left:465.2px;top:439px;font-size:4.95px;color:#222">Annotation</div>
<div class="dd" style="left:495.8px;top:441.3px;border-left-width:2.25px;border-right-width:2.25px;border-top-width:2.5px;border-top-color:#111"></div>
<div class="tl" style="left:505.6px;top:439px;font-size:4.7px;color:#333">(1:1)</div>
<div class="tl" style="left:518.3px;top:439px;font-size:4.7px;color:#333">(-64.11,185.85,0)</div>
<svg class="a" style="left:280px;top:434px" width="190" height="15" viewBox="280 434 190 15"><circle cx="289.6" cy="440.3" r="0.9" fill="#d02030" stroke="#d02030" stroke-width="0.2"/><path d="M290.4 441 L293 443.4" fill="none" stroke="#4a4a4a" stroke-width="0.6" /><path d="M292 441.6 L292.2 446 L293.3 445 L294.2 446.6 L294.9 446.2 L294.1 444.7 L295.4 444.5 Z" fill="#888" stroke="#555" stroke-width="0.3" /><rect x="302.2" y="439.4" width="6.6" height="6.6" fill="#5a5a5a" stroke="#444" stroke-width="0.3" rx="0"/><path d="M303.8 439.4 V446 M305.5 439.4 V446 M307.2 439.4 V446" fill="none" stroke="#8a8a8a" stroke-width="0.5" /><path d="M317 440 H321.2 Q323.2 442.4 321.2 444.8 H317 Q315.6 442.4 317 440 Z" fill="none" stroke="#4a4a4a" stroke-width="0.7" /><path d="M319.4 440.6 V444.2" fill="none" stroke="#4a4a4a" stroke-width="0.5" /><circle cx="332.4" cy="442.4" r="2.4" fill="none" stroke="#4a4a4a" stroke-width="0.7"/><path d="M332.4 439.4 V442.4" fill="none" stroke="#4a4a4a" stroke-width="0.5" /><path d="M335.6 440.4 L337 439.4 M336 442.4 H337.4" fill="none" stroke="#58a8e8" stroke-width="0.5" /><path d="M344.6 439.4 V445.8 M344 445.4 H351" fill="none" stroke="#4a4a4a" stroke-width="0.5" /><path d="M346 440.4 L349.6 444.4" fill="none" stroke="#4a4a4a" stroke-width="0.8" /><rect x="349.4" y="444.2" width="1.7" height="1.7" fill="#d02030" stroke="none" stroke-width="0.6" rx="0"/><path d="M345.4 439.6 H347.4" fill="none" stroke="#2f7fd2" stroke-width="0.7" /><path d="M359.6 446 L361 440.6 H362.4 L363.8 446 Z" fill="#8a9aa8" stroke="#6a7a8a" stroke-width="0.4" /><path d="M359.6 440 V442.4" fill="none" stroke="#2f7fd2" stroke-width="0.7" /><rect x="372.4" y="439.8" width="5" height="4.6" fill="none" stroke="#4a4a4a" stroke-width="0.6" rx="1.4"/><circle cx="377.2" cy="444.8" r="1.3" fill="none" stroke="#4a4a4a" stroke-width="0.5"/><path d="M371.6 441.4 H373 M371.6 443.6 H373" fill="none" stroke="#4a4a4a" stroke-width="0.5" /><rect x="388.2" y="441" width="4" height="4.4" fill="none" stroke="#4a4a4a" stroke-width="0.7" rx="0"/><path d="M385.8 443.2 H387.6" fill="none" stroke="#4a4a4a" stroke-width="0.6" /><path d="M389 439.6 H391" fill="none" stroke="#2f7fd2" stroke-width="0.7" /><path d="M385.4 443.2 L386.6 442.4 V444 Z" fill="#2f7fd2" stroke="#2f7fd2" stroke-width="0.2" /><rect x="400.6" y="439.6" width="3.6" height="4" fill="#1f4e8e" stroke="#1f4e8e" stroke-width="0.3" rx="0"/><rect x="402.2" y="441.2" width="3.6" height="4" fill="#2b6cc0" stroke="#1f4e8e" stroke-width="0.4" rx="0"/><path d="M451 442.4 H456.4 M453.7 439.7 V445.1" fill="none" stroke="#222" stroke-width="1" /></svg><svg class="a" style="left:780px;top:417px" width="20" height="10" viewBox="780 417 20 10"><rect x="784.4" y="421" width="2.2" height="2.2" fill="#333" stroke="#333" stroke-width="0.3" rx="0"/><path d="M785.4 420.8 V420 H787.6 V422.2 H786.8" fill="none" stroke="#333" stroke-width="0.5" /><path d="M794 420.2 L796.6 422.8 M796.6 420.2 L794 422.8" fill="none" stroke="#333" stroke-width="0.7" /></svg>
</div>
</body></html>
